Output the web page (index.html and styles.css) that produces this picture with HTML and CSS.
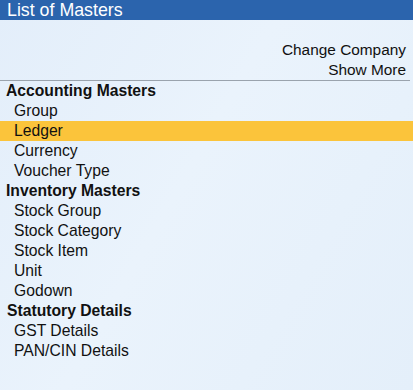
FILE: index.html
```html
<!DOCTYPE html>
<html>
<head>
<meta charset="utf-8">
<link rel="stylesheet" href="styles.css">
</head>
<body>
<div class="panel">
  <div class="title">List of Masters</div>
  <div class="top">
    <div class="action">Change Company</div>
    <div class="action">Show More</div>
  </div>
  <div class="list">
    <div class="head">Accounting Masters</div>
    <div class="item">Group</div>
    <div class="item selected">Ledger</div>
    <div class="item">Currency</div>
    <div class="item">Voucher Type</div>
    <div class="head">Inventory Masters</div>
    <div class="item">Stock Group</div>
    <div class="item">Stock Category</div>
    <div class="item">Stock Item</div>
    <div class="item">Unit</div>
    <div class="item">Godown</div>
    <div class="head head-stat">Statutory Details</div>
    <div class="item">GST Details</div>
    <div class="item">PAN/CIN Details</div>
  </div>
</div>
</body>
</html>
```
FILE: styles.css
```css
html, body {
  margin: 0;
  padding: 0;
}
body {
  width: 413px;
  height: 390px;
  overflow: hidden;
  background: #e5f0fb;
  font-family: "Liberation Sans", Arial, sans-serif;
  color: #111111;
}
.panel {
  display: flex;
  flex-direction: column;
  height: 390px;
  background: linear-gradient(120deg, #e3eefa 0%, #eaf3fc 45%, #e4effa 100%);
}
.title {
  height: 20px;
  line-height: 20px;
  background: #2b64ad;
  color: #ffffff;
  font-size: 17.8px;
  padding-left: 7px;
}
.top {
  padding-top: 20px;
  padding-right: 4px;
  display: flex;
  flex-direction: column;
  align-items: flex-end;
  border-bottom: 1px solid #9aa3ad;
  margin-right: 3px;
}
.action {
  height: 20px;
  line-height: 20px;
  font-size: 15.4px;
}
.list {
  display: flex;
  flex-direction: column;
}
.head {
  height: 20px;
  line-height: 20px;
  font-size: 15.7px;
  font-weight: bold;
  padding-left: 6px;
}
.head-stat {
  padding-left: 7px;
}
.item {
  height: 20px;
  line-height: 20px;
  font-size: 15.7px;
  padding-left: 14px;
}
.selected {
  background: #fbc43b;
}
```
